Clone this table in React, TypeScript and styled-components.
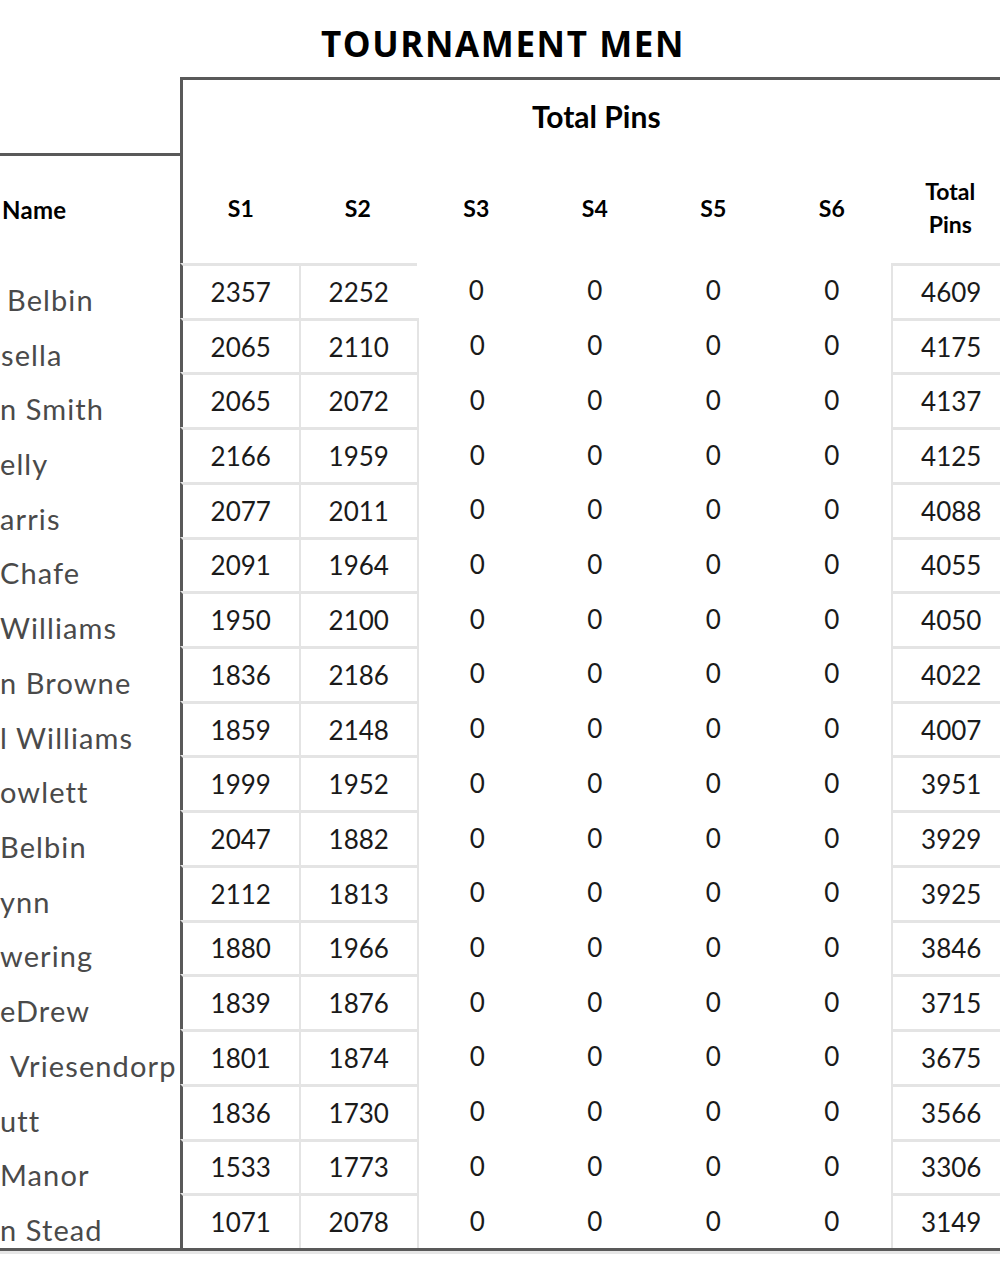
import { ReactElement } from "react";
import styled, { createGlobalStyle } from "styled-components";

// global page reset
const GlobalStyle = createGlobalStyle`
  html, body {
    margin: 0;
    padding: 0;
    background: #ffffff;
  }
  body {
    overflow: hidden;
    font-family: Lato, "Open Sans", sans-serif;
  }
`;

const DARK = "#595959";
const LIGHT = "#e4e4e4";

// styled components
const Page = styled.div`
  width: 1000px;
  height: 1269px;
  overflow: hidden;
`;

const Title = styled.h1`
  margin: 0;
  height: 77px;
  display: flex;
  align-items: center;
  justify-content: center;
  padding-top: 10px;
  padding-left: 6px;
  box-sizing: border-box;
  font-family: "Open Sans", Lato, sans-serif;
  font-weight: 700;
  font-size: 35px;
  letter-spacing: 1.6px;
  color: #000000;
`;

const Table = styled.div`
  display: grid;
  grid-template-columns: 180px repeat(7, 118.5px);
  grid-template-rows: 76px 110px repeat(18, 54.72px);
  width: 1009.5px;
  border-bottom: 3px solid ${DARK};
  box-shadow: 0 3px 0 #e6e6e6;
`;

const Blank = styled.div``;

const GroupHead = styled.div`
  grid-column: 2 / span 7;
  border-top: 3px solid ${DARK};
  border-left: 3px solid ${DARK};
  display: flex;
  align-items: center;
  justify-content: center;
  padding-bottom: 2px;
  font-weight: 700;
  font-size: 30px;
  color: #000000;
`;

const NameHead = styled.div`
  border-top: 3px solid ${DARK};
  display: flex;
  align-items: center;
  padding-left: 2px;
  font-weight: 700;
  font-size: 24px;
  letter-spacing: 0.3px;
  color: #000000;
`;

const ColHead = styled.div<{ $first?: boolean }>`
  border-left: ${(p) => (p.$first ? `3px solid ${DARK}` : "none")};
  display: flex;
  align-items: center;
  justify-content: center;
  text-align: center;
  line-height: 33px;
  font-weight: 700;
  font-size: 23px;
  color: #000000;
`;

const NameCell = styled.div<{ $indent: number }>`
  display: flex;
  align-items: center;
  padding-top: 18px;
  padding-left: ${(p) => p.$indent}px;
  white-space: nowrap;
  overflow: hidden;
  font-size: 29px;
  letter-spacing: 1.1px;
  color: #4a4a4a;
`;

const NumCell = styled.div<{
  $boxed?: boolean;
  $edge?: "dark" | "light" | "none";
}>`
  display: flex;
  align-items: center;
  justify-content: center;
  box-sizing: border-box;
  border-top: ${(p) => (p.$boxed ? `3px solid ${LIGHT}` : "none")};
  border-left: ${(p) =>
    p.$edge === "dark"
      ? `3px solid ${DARK}`
      : p.$edge === "light"
      ? `2px solid ${LIGHT}`
      : "none"};
  font-size: 26px;
  color: #1a1a1a;
`;

// typescript types
type Row = {
  name: string;
  indent: number;
  s1: number;
  s2: number;
};

const rows: Row[] = [
  { name: "Belbin", indent: 7, s1: 2357, s2: 2252 },
  { name: "sella", indent: 1, s1: 2065, s2: 2110 },
  { name: "n Smith", indent: 0, s1: 2065, s2: 2072 },
  { name: "elly", indent: 0, s1: 2166, s2: 1959 },
  { name: "arris", indent: 0, s1: 2077, s2: 2011 },
  { name: "Chafe", indent: 0, s1: 2091, s2: 1964 },
  { name: "Williams", indent: 0, s1: 1950, s2: 2100 },
  { name: "n Browne", indent: 0, s1: 1836, s2: 2186 },
  { name: "l Williams", indent: 0, s1: 1859, s2: 2148 },
  { name: "owlett", indent: 0, s1: 1999, s2: 1952 },
  { name: "Belbin", indent: 0, s1: 2047, s2: 1882 },
  { name: "ynn", indent: 0, s1: 2112, s2: 1813 },
  { name: "wering", indent: 0, s1: 1880, s2: 1966 },
  { name: "eDrew", indent: 0, s1: 1839, s2: 1876 },
  { name: "Vriesendorp", indent: 10, s1: 1801, s2: 1874 },
  { name: "utt", indent: 0, s1: 1836, s2: 1730 },
  { name: "Manor", indent: 0, s1: 1533, s2: 1773 },
  { name: "n Stead", indent: 0, s1: 1071, s2: 2078 },
];

const App = (): ReactElement => {
  return (
    <Page>
      <GlobalStyle />
      <Title>TOURNAMENT MEN</Title>
      <Table>
        <Blank />
        <GroupHead>Total Pins</GroupHead>

        <NameHead>Name</NameHead>
        <ColHead $first>S1</ColHead>
        <ColHead>S2</ColHead>
        <ColHead>S3</ColHead>
        <ColHead>S4</ColHead>
        <ColHead>S5</ColHead>
        <ColHead>S6</ColHead>
        <ColHead>
          Total
          <br />
          Pins
        </ColHead>

        {rows.map((r, i) => (
          <>
            <NameCell key={`n${i}`} $indent={r.indent}>
              {r.name}
            </NameCell>
            <NumCell key={`a${i}`} $boxed $edge="dark">
              {r.s1}
            </NumCell>
            <NumCell key={`b${i}`} $boxed $edge="light">
              {r.s2}
            </NumCell>
            <NumCell key={`c${i}`} $edge={i === 0 ? "none" : "light"}>
              0
            </NumCell>
            <NumCell key={`d${i}`}>0</NumCell>
            <NumCell key={`e${i}`}>0</NumCell>
            <NumCell key={`f${i}`}>0</NumCell>
            <NumCell key={`g${i}`} $boxed $edge="light">
              {r.s1 + r.s2}
            </NumCell>
          </>
        ))}
      </Table>
    </Page>
  );
};

export default App;
